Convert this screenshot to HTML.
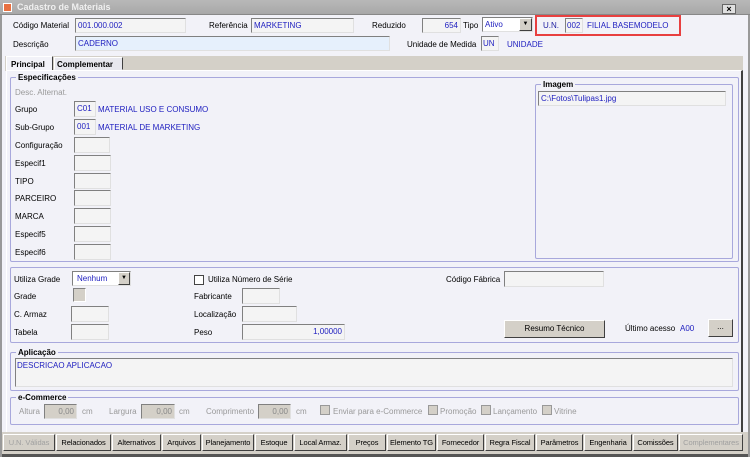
<!DOCTYPE html><html><head><meta charset="utf-8"><style>
*{box-sizing:border-box;margin:0;padding:0}
body{width:750px;height:457px;overflow:hidden;background:#f2f2f8;font-family:"Liberation Sans",Arial,sans-serif;font-size:8px;color:#000;position:relative}
.a{position:absolute;white-space:nowrap}
.l{position:absolute;white-space:nowrap;line-height:10px}
.i{position:absolute;background:#f4f4f4;border-top:1px solid #808080;border-left:1px solid #808080;border-bottom:1px solid #e0e0e0;border-right:1px solid #e0e0e0;color:#2020c0;padding:2px 2px 0;line-height:10px;white-space:nowrap;overflow:hidden}
.b{color:#2020c0}
.g{position:absolute;border:1px solid #a8a8dc;border-radius:2px}
.gt{position:absolute;font-weight:bold;background:#f2f2f8;padding:0 2px;line-height:9px;top:-5px;left:5px}
.btn{position:absolute;background:#d4d0c8;border:1px solid;border-color:#fff #404040 #404040 #fff;text-align:center;line-height:15px;top:434px;height:17px;font-size:7.5px;letter-spacing:-0.1px}
.dis{color:#a0a0a0}
.gr{color:#999}
</style></head><body>
<div class="a" style="left:0;top:0;width:750px;height:15px;background:linear-gradient(#b8b8b8,#a8a8a8);border-bottom:1px solid #888"></div>
<div class="a" style="left:3px;top:3px;width:9px;height:9px;background:#e87040;border:1px solid #fff"></div>
<div class="a" style="left:17px;top:2px;color:#f0f0f0;font-weight:bold;font-size:9px">Cadastro de Materiais</div>
<div class="a" style="left:722px;top:4px;width:14px;height:10px;background:#e0e0e0;border:1px solid #666;text-align:center;line-height:8px;font-size:9px;font-weight:bold">×</div>
<div class="a" style="left:0;top:15px;width:2px;height:442px;background:#999"></div>
<div class="a" style="left:748px;top:15px;width:2px;height:442px;background:#999"></div>

<div class="l" style="left:13px;top:21px">Código Material</div>
<div class="i" style="left:75px;top:18px;width:111px;height:15px">001.000.002</div>
<div class="l" style="left:209px;top:21px">Referência</div>
<div class="i" style="left:251px;top:18px;width:103px;height:15px">MARKETING</div>
<div class="l" style="left:372px;top:21px">Reduzido</div>
<div class="i" style="left:422px;top:18px;width:39px;height:15px;text-align:right">654</div>
<div class="l" style="left:463px;top:21px">Tipo</div>
<div class="i" style="left:482px;top:17px;width:51px;height:15px;background:#fff">Ativo</div>
<div class="a" style="left:519px;top:18px;width:13px;height:13px;background:#d4d0c8;border:1px solid;border-color:#fff #404040 #404040 #fff;font-size:6px;text-align:center;line-height:11px">▼</div>
<div class="a" style="left:535px;top:15px;width:146px;height:21px;border:2px solid #e84040"></div>
<div class="l" style="left:543px;top:21px;color:#2020a0">U.N.</div>
<div class="i" style="left:565px;top:18px;width:18px;height:15px;padding-left:1px">002</div>
<div class="l b" style="left:587px;top:21px">FILIAL BASEMODELO</div>

<div class="l" style="left:13px;top:40px">Descrição</div>
<div class="i" style="left:75px;top:36px;width:315px;height:15px;background:#e6f0fc">CADERNO</div>
<div class="l" style="left:407px;top:40px">Unidade de Medida</div>
<div class="i" style="left:481px;top:36px;width:18px;height:15px;padding-left:1px">UN</div>
<div class="l b" style="left:507px;top:40px">UNIDADE</div>

<div class="a" style="left:5px;top:56px;width:738px;height:15px;background:#d4d0c8"></div>
<div class="a" style="left:6px;top:56px;width:47px;height:15px;background:#f2f2f8;border:1px solid;border-color:#fff #404040 transparent #fff;font-weight:bold;padding:3px 0 0 4px">Principal</div>
<div class="a" style="left:54px;top:57px;width:69px;height:13px;background:#e8e8ee;border:1px solid;border-color:#fff #404040 transparent #fff;font-weight:bold;padding:2px 0 0 2px">Complementar</div>
<div class="a" style="left:6px;top:70px;width:737px;height:367px;border:1px solid;border-color:#fff #404040 #404040 #fff;border-right-width:2px"></div>

<div class="g" style="left:10px;top:77px;width:729px;height:185px"><div class="gt">Especificações</div></div>
<div class="l gr" style="left:15px;top:88px">Desc. Alternat.</div>
<div class="l" style="left:15px;top:105px">Grupo</div>
<div class="i" style="left:74px;top:101px;width:22px;height:16px">C01</div>
<div class="l b" style="left:98px;top:105px">MATERIAL USO E CONSUMO</div>
<div class="l" style="left:15px;top:123px">Sub-Grupo</div>
<div class="i" style="left:74px;top:119px;width:22px;height:16px">001</div>
<div class="l b" style="left:98px;top:123px">MATERIAL DE MARKETING</div>
<div class="l" style="left:15px;top:141px">Configuração</div><div class="i" style="left:74px;top:137px;width:36px;height:16px"></div>
<div class="l" style="left:15px;top:159px">Especif1</div><div class="i" style="left:74px;top:155px;width:37px;height:16px"></div>
<div class="l" style="left:15px;top:177px">TIPO</div><div class="i" style="left:74px;top:173px;width:37px;height:16px"></div>
<div class="l" style="left:15px;top:194px">PARCEIRO</div><div class="i" style="left:74px;top:190px;width:37px;height:16px"></div>
<div class="l" style="left:15px;top:212px">MARCA</div><div class="i" style="left:74px;top:208px;width:37px;height:16px"></div>
<div class="l" style="left:15px;top:230px">Especif5</div><div class="i" style="left:74px;top:226px;width:37px;height:16px"></div>
<div class="l" style="left:15px;top:248px">Especif6</div><div class="i" style="left:74px;top:244px;width:37px;height:16px"></div>

<div class="g" style="left:535px;top:84px;width:198px;height:175px"><div class="gt">Imagem</div></div>
<div class="i" style="left:538px;top:91px;width:188px;height:15px">C:\Fotos\Tulipas1.jpg</div>

<div class="g" style="left:10px;top:267px;width:729px;height:76px"></div>
<div class="l" style="left:14px;top:275px">Utiliza Grade</div>
<div class="i" style="left:72px;top:271px;width:59px;height:15px;background:#fff;padding-left:4px">Nenhum</div>
<div class="a" style="left:118px;top:272px;width:12px;height:13px;background:#d4d0c8;border:1px solid;border-color:#fff #404040 #404040 #fff;font-size:6px;text-align:center;line-height:11px">▼</div>
<div class="l" style="left:14px;top:292px">Grade</div>
<div class="a" style="left:73px;top:288px;width:13px;height:14px;background:#d4d0c8;border:1px solid;border-color:#808080 #fff #fff #808080"></div>
<div class="l" style="left:14px;top:310px">C. Armaz</div><div class="i" style="left:71px;top:306px;width:38px;height:16px"></div>
<div class="l" style="left:14px;top:328px">Tabela</div><div class="i" style="left:71px;top:324px;width:38px;height:16px"></div>
<div class="a" style="left:194px;top:275px;width:10px;height:10px;background:#fff;border:1px solid #444"></div>
<div class="l" style="left:208px;top:275px">Utiliza Número de Série</div>
<div class="l" style="left:194px;top:292px">Fabricante</div><div class="i" style="left:242px;top:288px;width:38px;height:16px"></div>
<div class="l" style="left:194px;top:310px">Localização</div><div class="i" style="left:242px;top:306px;width:55px;height:16px"></div>
<div class="l" style="left:194px;top:328px">Peso</div><div class="i" style="left:242px;top:324px;width:103px;height:16px;text-align:right">1,00000</div>
<div class="l" style="left:446px;top:275px">Código Fábrica</div><div class="i" style="left:504px;top:271px;width:100px;height:16px"></div>
<div class="a" style="left:504px;top:320px;width:101px;height:18px;background:#d4d0c8;border:1px solid;border-color:#fff #404040 #404040 #fff;text-align:center;line-height:16px">Resumo Técnico</div>
<div class="l" style="left:625px;top:324px">Último acesso</div>
<div class="l b" style="left:680px;top:324px">A00</div>
<div class="a" style="left:708px;top:319px;width:25px;height:18px;background:#d4d0c8;border:1px solid;border-color:#fff #404040 #404040 #fff;text-align:center;line-height:14px">...</div>

<div class="g" style="left:10px;top:352px;width:729px;height:39px"><div class="gt">Aplicação</div></div>
<div class="i" style="left:15px;top:358px;width:718px;height:29px;padding-left:1px">DESCRICAO APLICACAO</div>

<div class="g" style="left:10px;top:397px;width:729px;height:28px"><div class="gt">e-Commerce</div></div>
<div class="l gr" style="left:19px;top:407px">Altura</div><div class="i" style="left:44px;top:404px;width:33px;height:15px;background:#d4d0c8;color:#888;text-align:right">0,00</div><div class="l gr" style="left:82px;top:407px">cm</div>
<div class="l gr" style="left:109px;top:407px">Largura</div><div class="i" style="left:141px;top:404px;width:34px;height:15px;background:#d4d0c8;color:#888;text-align:right">0,00</div><div class="l gr" style="left:179px;top:407px">cm</div>
<div class="l gr" style="left:206px;top:407px">Comprimento</div><div class="i" style="left:258px;top:404px;width:33px;height:15px;background:#d4d0c8;color:#888;text-align:right">0,00</div><div class="l gr" style="left:296px;top:407px">cm</div>
<div class="a" style="left:320px;top:405px;width:10px;height:10px;background:#d4d0c8;border:1px solid #999"></div><div class="l gr" style="left:333px;top:407px">Enviar para e-Commerce</div>
<div class="a" style="left:428px;top:405px;width:10px;height:10px;background:#d4d0c8;border:1px solid #999"></div><div class="l gr" style="left:440px;top:407px">Promoção</div>
<div class="a" style="left:481px;top:405px;width:10px;height:10px;background:#d4d0c8;border:1px solid #999"></div><div class="l gr" style="left:493px;top:407px">Lançamento</div>
<div class="a" style="left:542px;top:405px;width:10px;height:10px;background:#d4d0c8;border:1px solid #999"></div><div class="l gr" style="left:554px;top:407px">Vitrine</div>

<div class="a" style="left:2px;top:432px;width:746px;height:25px;background:#d4d0c8;border-bottom:3px solid #555"></div>
<div class="btn dis" style="left:3px;width:52px">U.N. Válidas</div>
<div class="btn" style="left:56px;width:55px">Relacionados</div>
<div class="btn" style="left:112px;width:49px">Alternativos</div>
<div class="btn" style="left:162px;width:39px">Arquivos</div>
<div class="btn" style="left:202px;width:52px">Planejamento</div>
<div class="btn" style="left:255px;width:38px">Estoque</div>
<div class="btn" style="left:294px;width:53px">Local Armaz.</div>
<div class="btn" style="left:348px;width:38px">Preços</div>
<div class="btn" style="left:387px;width:49px">Elemento TG</div>
<div class="btn" style="left:437px;width:47px">Fornecedor</div>
<div class="btn" style="left:485px;width:50px">Regra Fiscal</div>
<div class="btn" style="left:536px;width:47px">Parâmetros</div>
<div class="btn" style="left:584px;width:48px">Engenharia</div>
<div class="btn" style="left:633px;width:45px">Comissões</div>
<div class="btn dis" style="left:679px;width:64px">Complementares</div>
</body></html>
